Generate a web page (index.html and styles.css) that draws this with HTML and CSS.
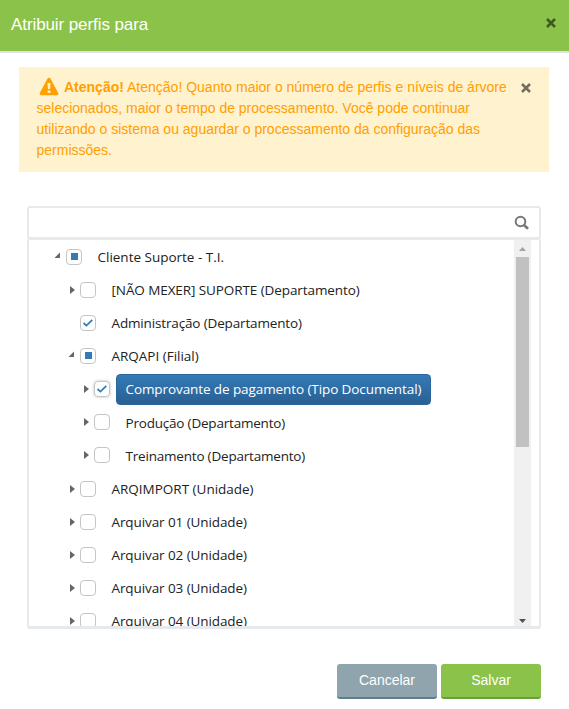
FILE: index.html
```html
<!DOCTYPE html>
<html lang="pt-BR">
<head>
<meta charset="utf-8">
<title>Atribuir perfis para</title>
<link rel="stylesheet" href="styles.css">
</head>
<body>
<header class="head"><h1>Atribuir perfis para</h1>
<svg class="x" width="12" height="12" viewBox="0 0 12 12"><path d="M2 2L10 10M10 2L2 10"/></svg></header>
<main>
<section class="alert">
<p><svg class="warn" width="20" height="19" viewBox="0 0 20 19"><path d="M10 .8Q11 .8 11.6 1.8L19.2 16Q20 18 18 18.2H2Q0 18 .8 16L8.4 1.8Q9 .8 10 .8Z" fill="#ff9f00"/><path d="M8.5 6h3l-.4 6H8.9zM8.6 13.4h2.8v2.5H8.6z" fill="#fff2cf"/></svg><b>Atenção!</b> <span>Atenção! Quanto maior o número de perfis e níveis de árvore</span><br>selecionados, maior o tempo de processamento. Você pode continuar<br>utilizando o sistema ou aguardar o processamento da configuração das<br>permissões.</p>
<svg class="x" width="12" height="12" viewBox="0 0 12 12"><path d="M2 2L10 10M10 2L2 10"/></svg>
</section>
<div class="search"><svg width="16" height="16" viewBox="0 0 16 16"><circle cx="6.5" cy="6.5" r="4.8"/><path d="M10.2 10.2L14 13.8" stroke-width="2.6"/></svg></div>
<div class="panel">
<ul class="tree">
<li><i class="arrow open"></i><i class="box part"></i><span class="label wide">Cliente Suporte - T.I.</span></li>
<li class="l1"><i class="arrow"></i><i class="box"></i><span class="label">[NÃO MEXER] SUPORTE (Departamento)</span></li>
<li class="l1"><i class="arrow none"></i><i class="box"><svg width="14" height="14" viewBox="0 0 14 14"><path d="M2.5 7L5.4 9.6L11.3 3.8"/></svg></i><span class="label snug">Administração (Departamento)</span></li>
<li class="l1"><i class="arrow open"></i><i class="box part"></i><span class="label wide">ARQAPI (Filial)</span></li>
<li class="l2"><i class="arrow"></i><i class="box focus"><svg width="14" height="14" viewBox="0 0 14 14"><path d="M2.5 7L5.4 9.6L11.3 3.8"/></svg></i><span class="label selected">Comprovante de pagamento (Tipo Documental)</span></li>
<li class="l2"><i class="arrow"></i><i class="box"></i><span class="label tight">Produção (Departamento)</span></li>
<li class="l2"><i class="arrow"></i><i class="box"></i><span class="label tight">Treinamento (Departamento)</span></li>
<li class="l1 next"><i class="arrow"></i><i class="box"></i><span class="label wide">ARQIMPORT (Unidade)</span></li>
<li class="l1"><i class="arrow"></i><i class="box"></i><span class="label">Arquivar 01 (Unidade)</span></li>
<li class="l1"><i class="arrow"></i><i class="box"></i><span class="label">Arquivar 02 (Unidade)</span></li>
<li class="l1"><i class="arrow"></i><i class="box"></i><span class="label">Arquivar 03 (Unidade)</span></li>
<li class="l1"><i class="arrow"></i><i class="box"></i><span class="label">Arquivar 04 (Unidade)</span></li>
</ul>
<div class="scroll"><i class="up"></i><i class="thumb"></i><i class="down"></i></div>
</div>
<footer><button class="cancel">Cancelar</button><button class="save">Salvar</button></footer>
</main>
</body>
</html>
```
FILE: styles.css
```css
* { box-sizing: border-box; }
body { margin: 0; height: 709px; overflow: hidden; background: #fff; font-family: "Liberation Sans", Arial, sans-serif; font-size: 14px; }
.head { height: 53px; background: #8bc34a; border-bottom: 2px solid #dee2e6; display: flex; justify-content: space-between; padding: 15px 12px 0 11px; }
h1 { margin: 0; font-size: 17px; line-height: 20px; font-weight: 400; color: #fff; letter-spacing: -.09px; }
.x { display: block; flex: none; }
.x path { stroke: #000; stroke-opacity: .55; stroke-width: 2.5; fill: none; }
.head .x { margin-top: 2px; }
.alert { margin: 14px 20px 0 19px; height: 105px; background: #fff2cf; color: #ff9f00; display: flex; justify-content: space-between; padding: 10px 17.5px 0 17.5px; }
.alert p { margin: 0; line-height: 21px; white-space: nowrap; }
.alert .x { margin-top: 5px; }
.warn { margin: -4px 5.5px 0 2px; height: 19px; vertical-align: -4px; }
.search { margin: 34px 28px 0 27px; height: 33px; border: 2px solid #e6eaed; border-radius: 3px; display: flex; justify-content: flex-end; padding: 7px 9px 0 0; }
.search svg { fill: none; stroke: #777; stroke-width: 2; }
.panel { margin: -1px 28px 0 27px; height: 391px; border: 2px solid #e6eaed; border-bottom-width: 3px; border-radius: 3px; display: flex; overflow: hidden; padding-right: 8px; }
.tree { list-style: none; margin: 0; padding: .4px 0 0 22px; flex: 1; height: 386px; overflow: hidden; }
.tree li { height: 33px; display: flex; align-items: center; }
.tree .next { margin-top: 1px; }
.l1 { padding-left: 14px; }
.l2 { padding-left: 28px; }
.arrow { width: 6px; height: 8px; margin: 0 4px 0 5px; background: #666; clip-path: polygon(0 0, 5px 4px, 0 8px); flex: none; }
.arrow.open { width: 6px; height: 6px; margin: -3px 6px 0 3px; clip-path: polygon(6px 0, 6px 6px, 0 6px); }
.arrow.none { visibility: hidden; }
.box { width: 16px; height: 16px; border: 1px solid #c5c5c5; border-radius: 4px; flex: none; display: flex; align-items: center; justify-content: center; margin-right: 6px; }
.box.part::after { content: ""; width: 7px; height: 7px; background: #337ab7; }
.box svg { fill: none; stroke: #337ab7; stroke-width: 1.7; flex: none; }
.box.focus { box-shadow: 0 0 3px #bbb; }
.label { height: 31px; line-height: 31px; padding: 0 9px 0 8.5px; border-radius: 4px; border: 1px solid transparent; font-family: "Open Sans", "Noto Sans", sans-serif; font-size: 13.5px; letter-spacing: -.09px; color: #222; white-space: nowrap; }
.wide { letter-spacing: -.01px; }
.snug { letter-spacing: -.15px; }
.tight { letter-spacing: -.2px; margin-top: 2px; }
.selected { margin-top: 1px; line-height: 28px; color: #fff; border-color: #2b669a; background: linear-gradient(#337ab7, #2a6092); }
.scroll { width: 17px; background: #f0f0f0; display: flex; flex-direction: column; align-items: center; }
.up, .down { width: 7px; height: 4px; background: #a3a3a3; clip-path: polygon(50% 0, 100% 100%, 0 100%); margin: 7px 0 6px; flex: none; }
.thumb { width: 13px; height: 190px; background: #c1c1c1; }
.down { background: #505050; clip-path: polygon(0 0, 100% 0, 50% 100%); margin: auto 0 3px; }
footer { margin: 35px 28px 0 0; display: flex; justify-content: flex-end; gap: 4px; }
button { width: 100px; height: 35px; border: 0; border-bottom: 2px solid #689f38; border-radius: 3px; background: #8bc34a; color: #fff; font: 14px "Liberation Sans", Arial, sans-serif; padding: 0 0 1px; }
.cancel { background: #90a4ae; border-color: #607d8b; }
```
